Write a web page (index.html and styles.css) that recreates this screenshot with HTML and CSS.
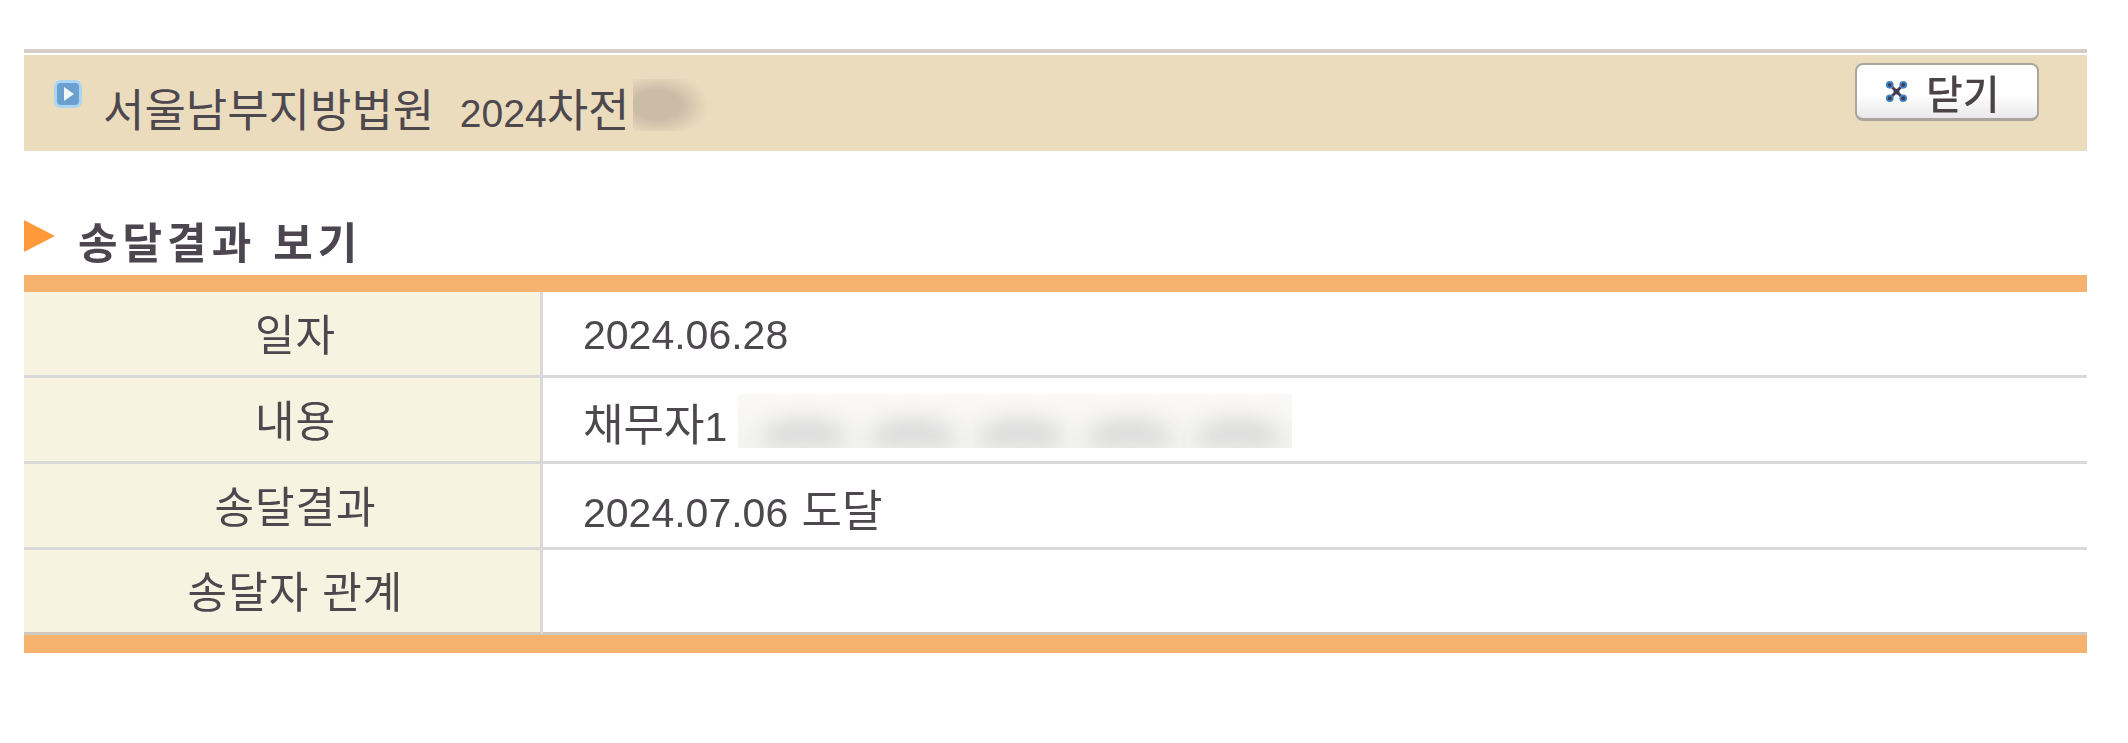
FILE: index.html
```html
<!DOCTYPE html>
<html lang="ko">
<head>
<meta charset="utf-8">
<title>송달결과 보기</title>
<link rel="stylesheet" href="styles.css">
</head>
<body>
<div class="page">
  <div class="topline"></div>
  <header class="banner">
    <div class="banner-title">
      <svg class="bullet" viewBox="0 0 30 30" aria-hidden="true">
        <rect x="1" y="1" width="28" height="28" rx="7" fill="#a9d6f2"/>
        <rect x="4" y="4" width="22" height="22" rx="4" fill="#6b9fcf"/>
        <path d="M11 8 L21 15 L11 22 Z" fill="#eef6fb"/>
      </svg>
      <span class="banner-text"><span class="ko">서울남부지방법원</span>&nbsp; 2024<span class="ko">차전</span></span>
      <span class="smudge-case"></span>
    </div>
    <button class="close" type="button">
      <svg class="close-x" viewBox="0 0 24 24" aria-hidden="true">
        <path d="M5 5 L19 19 M19 5 L5 19" stroke="#4a3f4a" stroke-width="3"/>
        <g fill="#3f7fc4">
          <circle cx="5" cy="5" r="4"/><circle cx="19" cy="5" r="4"/>
          <circle cx="5" cy="19" r="4"/><circle cx="19" cy="19" r="4"/>
        </g>
        <g fill="#3a3d55">
          <circle cx="5" cy="5" r="2"/><circle cx="19" cy="5" r="2"/>
          <circle cx="5" cy="19" r="2"/><circle cx="19" cy="19" r="2"/>
          <circle cx="12" cy="12" r="3"/>
        </g>
      </svg>
      <span class="close-label">닫기</span>
    </button>
  </header>

  <h2 class="section-title"><span class="arrow"></span>송달결과 보기</h2>

  <table class="result">
    <tr><th>일자</th><td>2024.06.28</td></tr>
    <tr><th>내용</th><td class="has-smudge"><span class="ko">채무자</span>1<span class="smudge-bar"><i></i><i></i><i></i><i></i><i></i></span></td></tr>
    <tr><th>송달결과</th><td class="spaced">2024.07.06 <span class="ko">도달</span></td></tr>
    <tr class="last"><th>송달자 관계</th><td></td></tr>
  </table>
</div>
</body>
</html>
```
FILE: styles.css
```css
* { box-sizing: border-box; }
html, body { margin: 0; background: #fff; }
body {
  width: 2128px;
  height: 743px;
  overflow: hidden;
  font-family: "Liberation Sans", "Noto Sans CJK KR", sans-serif;
  color: #4d484e;
}
.page { padding: 49px 41px 0 24px; filter: blur(0.45px); }
.ko { font-size: 44px; font-family: "Noto Sans CJK KR", sans-serif; }
.topline { height: 4px; background: #d3cfc4; }
.banner {
  margin-top: 2px;
  height: 96px;
  background: #ecdcbe;
  display: flex;
  align-items: flex-start;
  justify-content: space-between;
  padding: 8px 48px 0 29px;
}
.banner-title { display: flex; align-items: flex-start; }
.bullet { width: 30px; height: 30px; margin-top: 16px; flex: none; }
.banner-text {
  font-size: 39px;
  line-height: 50px;
  margin-left: 20px;
  margin-top: 20px;
  word-spacing: 2px;
  white-space: pre;
}
.banner-text .ko { font-size: 45px; word-spacing: 0; }
.smudge-case {
  display: block;
  width: 89px;
  height: 52px;
  margin: 16px 0 0 4px;
  background: radial-gradient(ellipse 52px 32px at 24px 26px, #cbbca8 45%, #ecdcbe 100%);
}
.close {
  width: 184px;
  height: 58px;
  padding: 0 0 0 28px;
  display: flex;
  align-items: center;
  gap: 18px;
  border: 2px solid #a9a69f;
  border-bottom-width: 3px;
  border-radius: 8px;
  background: linear-gradient(#fff, #fff 55%, #e9e9e9);
  color: #4a4448;
  font-family: "Noto Sans CJK KR", sans-serif;
}
.close-x { width: 23px; height: 23px; flex: none; }
.close-label { font-size: 40px; line-height: 1; font-weight: 500; }
.section-title {
  margin: 60px 0 0;
  height: 64px;
  padding-bottom: 6px;
  display: flex;
  align-items: center;
  font-size: 43px;
  font-weight: 700;
  letter-spacing: 5px;
  color: #4b4650;
  font-family: "Noto Sans CJK KR", sans-serif;
}
.arrow {
  width: 0;
  height: 0;
  margin: -8px 23px 0 0;
  border-left: 31px solid #ff9a3a;
  border-top: 16px solid transparent;
  border-bottom: 16px solid transparent;
}
.result {
  width: 100%;
  border-collapse: separate;
  border-spacing: 0;
  table-layout: fixed;
  border-top: 17px solid #f6b36f;
  border-bottom: 18px solid #f6b36f;
}
.result tr { height: 86px; }
.result tr.last { height: 85px; }
.result th, .result td {
  padding: 4px 0 0;
  border-bottom: 3px solid #d9d9d9;
  font-size: 41px;
  font-weight: 400;
}
.result tr:last-child th, .result tr:last-child td { border-bottom-color: #cfcac0; }
.result th {
  width: 519px;
  padding: 0 0 4px 27px;
  background: #f6f3e1;
  text-align: center;
  border-right: 3px solid #d9d9d9;
  font-size: 43px;
  letter-spacing: 1px;
  font-family: "Noto Sans CJK KR", sans-serif;
}
.result td { padding-left: 40px; }
.result td.spaced { word-spacing: 2px; }
.result td.has-smudge { position: relative; }
.smudge-bar {
  position: absolute;
  left: 195px;
  top: 16px;
  display: flex;
  align-items: flex-end;
  justify-content: space-between;
  width: 554px;
  height: 54px;
  padding: 0 14px 0 26px;
  overflow: hidden;
  background: linear-gradient(#faf9f7, #f3f3f1);
}
.smudge-bar i {
  display: block;
  width: 80px;
  height: 30px;
  border-radius: 50% 50% 0 0;
  background: #dcdcdc;
  filter: blur(10px);
}
```
